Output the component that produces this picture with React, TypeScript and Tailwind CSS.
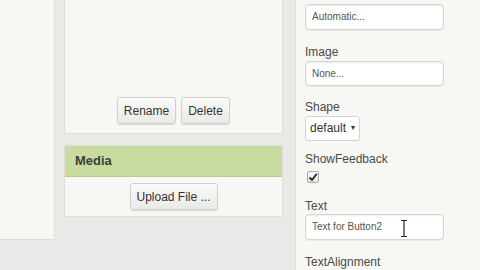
import React from 'react'

const font = { fontFamily: '"Liberation Sans", Arial, sans-serif' }

function Btn({ children, className = '' }: { children: React.ReactNode; className?: string }) {
  return (
    <div
      className={`flex items-center justify-center h-[27px] rounded-[3px] border border-[#cfcfcc] bg-gradient-to-b from-[#fbfbfa] to-[#e9e9e6] text-[12px] text-[#333] shadow-[0_1px_1px_rgba(0,0,0,0.12)] ${className}`}
    >
      {children}
    </div>
  )
}

function Label({ children, className = '' }: { children: React.ReactNode; className?: string }) {
  return <div className={`h-[16px] leading-[16px] text-[12px] text-[#4a4a4a] ${className}`}>{children}</div>
}

function Field({ children, className = '' }: { children: React.ReactNode; className?: string }) {
  return (
    <div
      className={`relative flex items-center w-[139px] h-[26px] rounded-[4px] border border-[#d3d3d0] bg-white pl-[6px] text-[10px] text-[#555] shadow-[inset_0_1px_2px_rgba(0,0,0,0.08),0_1px_0_rgba(0,0,0,0.05)] ${className}`}
    >
      {children}
    </div>
  )
}

export default function App() {
  return (
    <div className="w-[480px] h-[270px] overflow-hidden bg-[#e9e9e7] flex" style={font}>
      {/* left panel */}
      <div className="w-[55px] h-[240px] bg-[#f7f7f4] border-r border-b border-[#dededb]" />

      {/* middle column */}
      <div className="ml-[9px] w-[219px] flex flex-col">
        <div className="h-[134px] bg-[#f7f7f4] border-l border-r border-b border-[#dededb] flex items-end justify-center gap-[5px] pb-[9px]">
          <Btn className="w-[59px]">Rename</Btn>
          <Btn className="w-[49px]">Delete</Btn>
        </div>
        <div className="mt-[11px] border border-[#dededb] bg-[#f7f7f4]">
          <div className="h-[31px] bg-[#c9dc9f] flex items-center pl-[10px] text-[13px] font-bold text-[#3d3d3d] border-b border-[#b8cc8c]">
            Media
          </div>
          <div className="h-[39px] flex items-center justify-center">
            <Btn className="w-[88px] h-[26px]">Upload File ...</Btn>
          </div>
        </div>
      </div>

      {/* properties */}
      <div className="ml-[12px] flex-1 bg-[#f7f7f4] border-l border-[#dededb] pl-[9px] pt-[4px] flex flex-col">
        <Field>Automatic...</Field>
        <Label className="mt-[14px]">Image</Label>
        <Field className="mt-[1px]">None...</Field>
        <Label className="mt-[13px]">Shape</Label>
        <div className="mt-[1px] flex items-center w-[55px] h-[25px] rounded-[3px] border border-[#d3d3d0] bg-white pl-[4px] text-[12px] text-[#333]">
          default
          <span className="ml-[5px] text-[8px]">▾</span>
        </div>
        <Label className="mt-[10px]">ShowFeedback</Label>
        <div className="mt-[4px] ml-[2px] w-[12px] h-[12px] border border-[#a9a9a9] rounded-[2px] bg-gradient-to-b from-white to-[#e4e4e4] flex items-center justify-center">
          <svg width="10" height="10" viewBox="0 0 10 10">
            <path d="M1.5 5.5 L4 8 L8.8 1.8" fill="none" stroke="#222" strokeWidth="1.8" />
          </svg>
        </div>
        <Label className="mt-[15px]">Text</Label>
        <Field className="h-[27px]">
          Text for Button2
          <svg className="absolute left-[94px] top-[5px]" width="8" height="17" viewBox="0 0 8 17">
            <path d="M1 0.5 H7 M4 0.5 V16.5 M1 16.5 H7" stroke="#222" strokeWidth="1.2" fill="none" />
          </svg>
        </Field>
        <Label className="mt-[14px]">TextAlignment</Label>
      </div>
    </div>
  )
}
